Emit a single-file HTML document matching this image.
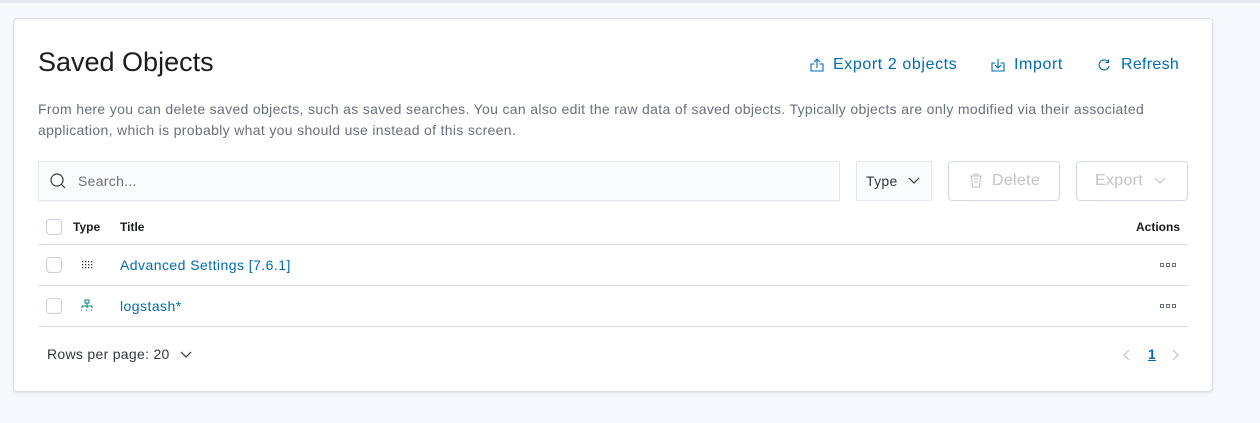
<!DOCTYPE html>
<html><head><style>
*{margin:0;padding:0;box-sizing:border-box}
body{width:1260px;height:423px;background:#f7f8fb;font-family:"Liberation Sans",sans-serif;position:relative;overflow:hidden;color:#343741;letter-spacing:0.3px}
.a{position:absolute;white-space:nowrap}
.top{position:absolute;left:0;top:0;width:1260px;height:3px;background:#e4e7ee}
.panel{position:absolute;left:13px;top:18px;width:1200px;height:374px;background:#fff;border:1px solid #d8dde6;border-radius:4px;box-shadow:0 1px 2px rgba(0,0,0,.08)}
.link{color:#006bb4;font-size:16px}
.cb{position:absolute;width:16px;height:16px;border:1px solid #c9cfd8;border-radius:4px;background:#fff}
.line{position:absolute;left:38px;width:1150px;height:1px;background:#d3dae6}
.dots{position:absolute;font-size:0}
.dots i{display:inline-block;width:4px;height:4px;border:1px solid #69707d;margin-right:2px}
</style></head><body>
<div class="top"></div>
<div class="panel"></div>
<div class="a" style="left:38px;top:47px;font-size:27px;color:#1a1c21;letter-spacing:0">Saved Objects</div>
<svg class="a" style="left:809px;top:57px" width="16" height="16" viewBox="0 0 16 16" fill="none" stroke="#006bb4" stroke-width="1.1"><path d="M8 2v9M5 5l3-3 3 3M5.5 7H2v7h12V7h-3.5"/></svg>
<div class="a link" style="left:833px;top:56px;letter-spacing:0.6px">Export 2 objects</div>
<svg class="a" style="left:990px;top:57px" width="16" height="16" viewBox="0 0 16 16" fill="none" stroke="#006bb4" stroke-width="1.1"><path d="M8 2v9M5 8l3 3 3-3M5.5 6H2v8h12V6h-3.5"/></svg>
<div class="a link" style="left:1014px;top:56px;letter-spacing:0.6px">Import</div>
<svg class="a" style="left:1097px;top:58px" width="14" height="14" viewBox="0 0 14 14" fill="none" stroke="#006bb4" stroke-width="1.1"><path d="M11.5 4.5A5 5 0 1 0 12 8M11.5 1.5v3h-3"/></svg>
<div class="a link" style="left:1121px;top:56px;letter-spacing:0.3px">Refresh</div>
<div class="a" style="left:38px;top:99px;font-size:14px;line-height:21px;color:#69707d;white-space:normal;width:1150px;letter-spacing:0.33px">From here you can delete saved objects, such as saved searches. You can also edit the raw data of saved objects. Typically objects are only modified via their associated application, which is probably what you should use instead of this screen.</div>
<div class="a" style="left:38px;top:161px;width:802px;height:40px;background:#fbfcfd;border:1px solid #e4e7ee;box-shadow:0 1px 1px rgba(0,0,0,.05)"></div>
<svg class="a" style="left:49px;top:172px" width="18" height="18" viewBox="0 0 18 18" fill="none" stroke="#343741" stroke-width="1.2"><circle cx="8" cy="8" r="6"/><path d="M12.5 12.5l3.5 3.5"/></svg>
<div class="a" style="left:78px;top:173px;font-size:14px;color:#69707d">Search...</div>
<div class="a" style="left:856px;top:161px;width:76px;height:40px;background:#fbfcfd;border:1px solid #e4e7ee"></div>
<div class="a" style="left:866px;top:173px;font-size:14px;color:#343741">Type</div>
<svg class="a" style="left:907px;top:176px" width="14" height="10" viewBox="0 0 14 10" fill="none" stroke="#343741" stroke-width="1.2"><path d="M2 2l5 5 5-5"/></svg>
<div class="a" style="left:948px;top:161px;width:112px;height:40px;border:1px solid #d3dae6;border-radius:4px"></div>
<svg class="a" style="left:968px;top:172px" width="16" height="17" viewBox="0 0 16 17" fill="none" stroke="#c2c3c6" stroke-width="1.1"><path d="M2 4h12M6 4V2h4v2M3.5 4l1 11h7l1-11M6 7h4M6 10h4"/></svg>
<div class="a" style="left:992px;top:172px;font-size:16px;color:#c2c3c6">Delete</div>
<div class="a" style="left:1076px;top:161px;width:112px;height:40px;border:1px solid #d3dae6;border-radius:4px"></div>
<div class="a" style="left:1095px;top:172px;font-size:16px;color:#c2c3c6">Export</div>
<svg class="a" style="left:1153px;top:176px" width="14" height="10" viewBox="0 0 14 10" fill="none" stroke="#c2c3c6" stroke-width="1.2"><path d="M2 2l5 5 5-5"/></svg>
<div class="cb" style="left:46px;top:219px"></div>
<div class="a" style="left:73px;top:220px;font-size:12px;font-weight:bold;color:#1a1c21;letter-spacing:0">Type</div>
<div class="a" style="left:120px;top:220px;font-size:12px;font-weight:bold;color:#1a1c21;letter-spacing:0">Title</div>
<div class="a" style="left:1136px;top:220px;font-size:12px;font-weight:bold;color:#1a1c21;letter-spacing:0">Actions</div>
<div class="line" style="top:244px"></div>
<div class="cb" style="left:46px;top:257px"></div>
<svg class="a" style="left:81px;top:259px" width="12" height="12" viewBox="0 0 12 12" fill="#343741"><rect x="1" y="2" width="1.3" height="1.3"/><rect x="4" y="2" width="1.3" height="1.3"/><rect x="7" y="2" width="1.3" height="1.3"/><rect x="10" y="2" width="1.3" height="1.3"/><rect x="1" y="5" width="1.3" height="1.3"/><rect x="4" y="5" width="1.3" height="1.3"/><rect x="7" y="5" width="1.3" height="1.3"/><rect x="10" y="5" width="1.3" height="1.3"/><rect x="1" y="8" width="1.3" height="1.3"/><rect x="4" y="8" width="1.3" height="1.3"/><rect x="7" y="8" width="1.3" height="1.3"/><rect x="10" y="8" width="1.3" height="1.3"/></svg>
<div class="a link" style="left:120px;top:257px;font-size:14px;letter-spacing:0.45px">Advanced Settings [7.6.1]</div>
<div class="dots" style="left:1160px;top:263px"><i></i><i></i><i></i></div>
<div class="line" style="top:285px"></div>
<div class="cb" style="left:46px;top:298px"></div>
<svg class="a" style="left:80px;top:299px" width="14" height="14" viewBox="0 0 14 14" fill="none" stroke="#017d73" stroke-width="1"><rect x="5" y="1" width="4" height="3"/><path d="M7 4v3M2 7h10M2 7v2M7 7v2M12 7v2" /><path d="M1 11h2M6 11h2M11 11h2" stroke-dasharray="1 1"/></svg>
<div class="a link" style="left:120px;top:298px;font-size:14px;letter-spacing:0.45px">logstash*</div>
<div class="dots" style="left:1160px;top:304px"><i></i><i></i><i></i></div>
<div class="line" style="top:326px"></div>
<div class="a" style="left:47px;top:346px;font-size:14px;color:#343741">Rows per page: 20</div>
<svg class="a" style="left:179px;top:350px" width="14" height="10" viewBox="0 0 14 10" fill="none" stroke="#343741" stroke-width="1.2"><path d="M2 2l5 5 5-5"/></svg>
<svg class="a" style="left:1122px;top:348px" width="10" height="14" viewBox="0 0 10 14" fill="none" stroke="#c2c3c6" stroke-width="1.2"><path d="M7 2L2 7l5 5"/></svg>
<div class="a" style="left:1148px;top:346px;font-size:14px;font-weight:bold;color:#006bb4;text-decoration:underline">1</div>
<svg class="a" style="left:1170px;top:348px" width="10" height="14" viewBox="0 0 10 14" fill="none" stroke="#c2c3c6" stroke-width="1.2"><path d="M3 2l5 5-5 5"/></svg>
</body></html>
